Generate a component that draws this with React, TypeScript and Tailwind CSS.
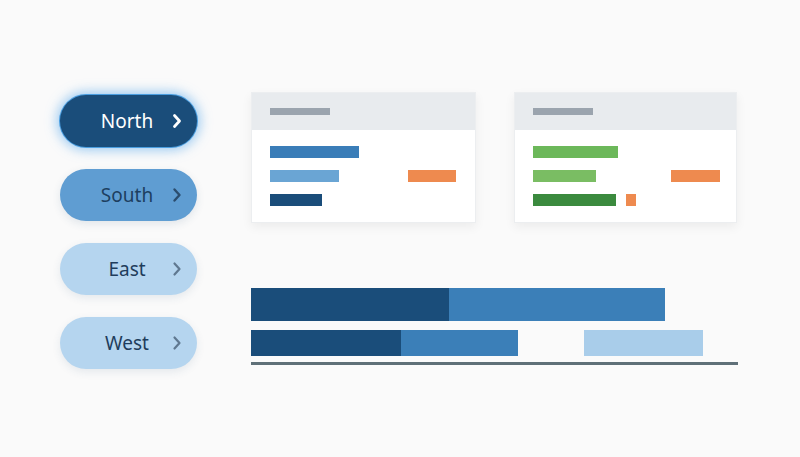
const regions = [
  { name: "North", btn: "bg-[#1a4d7a] text-white shadow-[0_0_12px_3px_rgba(72,160,235,0.55)] ring-1 ring-[#4a9ee0]", chev: "#ffffff", sw: 2.8 },
  { name: "South", btn: "bg-[#5f9dd2] text-[#1d3f60] shadow-[0_3px_8px_rgba(40,80,120,0.12)]", chev: "#2b4d6e", sw: 2.4 },
  { name: "East", btn: "bg-[#b5d5ef] text-[#1f3d5c] shadow-[0_3px_8px_rgba(40,80,120,0.1)]", chev: "#5f7890", sw: 2.2 },
  { name: "West", btn: "bg-[#b5d5ef] text-[#1f3d5c] shadow-[0_3px_8px_rgba(40,80,120,0.1)]", chev: "#5f7890", sw: 2.2 },
]

function Chevron({ color, sw }: { color: string; sw: number }) {
  return (
    <svg width="12" height="16" viewBox="0 0 12 16" fill="none">
      <path d="M3.5 2.5 L8.5 8 L3.5 13.5" stroke={color} strokeWidth={sw} strokeLinecap="round" strokeLinejoin="round" />
    </svg>
  )
}

function Bar({ w, c, ml = 0 }: { w: number; c: string; ml?: number }) {
  return <div className="h-[12px]" style={{ width: w, background: c, marginLeft: ml }} />
}

function Card({ width, rows }: { width: number; rows: { w: number; c: string; extra?: { left: number; w: number } }[] }) {
  return (
    <div className="bg-white border border-[#eceef0] shadow-[0_4px_10px_rgba(0,0,0,0.06)] h-[131px] flex flex-col" style={{ width }}>
      <div className="h-[37px] bg-[#e8ebee] flex items-center pl-[18px]">
        <div className="w-[60px] h-[7px] bg-[#9ba4ae]" />
      </div>
      <div className="flex flex-col gap-[12px] pl-[18px] pt-[16px]">
        {rows.map((r, i) => (
          <div key={i} className="flex">
            <Bar w={r.w} c={r.c} />
            {r.extra && <Bar w={r.extra.w} c="#ee8a4f" ml={r.extra.left - r.w} />}
          </div>
        ))}
      </div>
    </div>
  )
}

export default function App() {
  return (
    <div className="w-[800px] h-[457px] bg-[#fafafa] flex" style={{ fontFamily: '"Noto Sans", "Open Sans", sans-serif' }}>
      {/* region selector */}
      <div className="flex flex-col gap-[22px] pl-[60px] pt-[95px]">
        {regions.map((r) => (
          <button key={r.name} className={`w-[137px] h-[52px] rounded-full flex items-center pl-[23px] pr-[14px] ${r.btn}`}>
            <span className="flex-1 text-center text-[19px] leading-none">{r.name}</span>
            <Chevron color={r.chev} sw={r.sw} />
          </button>
        ))}
      </div>

      <div className="flex flex-col pl-[54px] pt-[92px]">
        <div className="flex gap-[38px]">
          <Card
            width={225}
            rows={[
              { w: 89, c: "#3a7db8" },
              { w: 69, c: "#6aa5d4", extra: { left: 138, w: 48 } },
              { w: 52, c: "#1a4d7a" },
            ]}
          />
          <Card
            width={223}
            rows={[
              { w: 85, c: "#6cb85a" },
              { w: 63, c: "#7abd63", extra: { left: 138, w: 49 } },
              { w: 83, c: "#3b8a3e", extra: { left: 93, w: 10 } },
            ]}
          />
        </div>

        {/* stacked totals */}
        <div className="mt-[65px] w-[487px] flex flex-col">
          <div className="flex h-[33px]">
            <div className="w-[198px] bg-[#1a4d7a]" />
            <div className="w-[216px] bg-[#3b7fb8]" />
          </div>
          <div className="flex h-[26px] mt-[9px]">
            <div className="w-[150px] bg-[#1a4d7a]" />
            <div className="w-[117px] bg-[#3b7fb8]" />
            <div className="w-[119px] bg-[#a9cdea] ml-[66px]" />
          </div>
          <div className="h-[3px] bg-[#5f7078] mt-[6px]" />
        </div>
      </div>
    </div>
  )
}
